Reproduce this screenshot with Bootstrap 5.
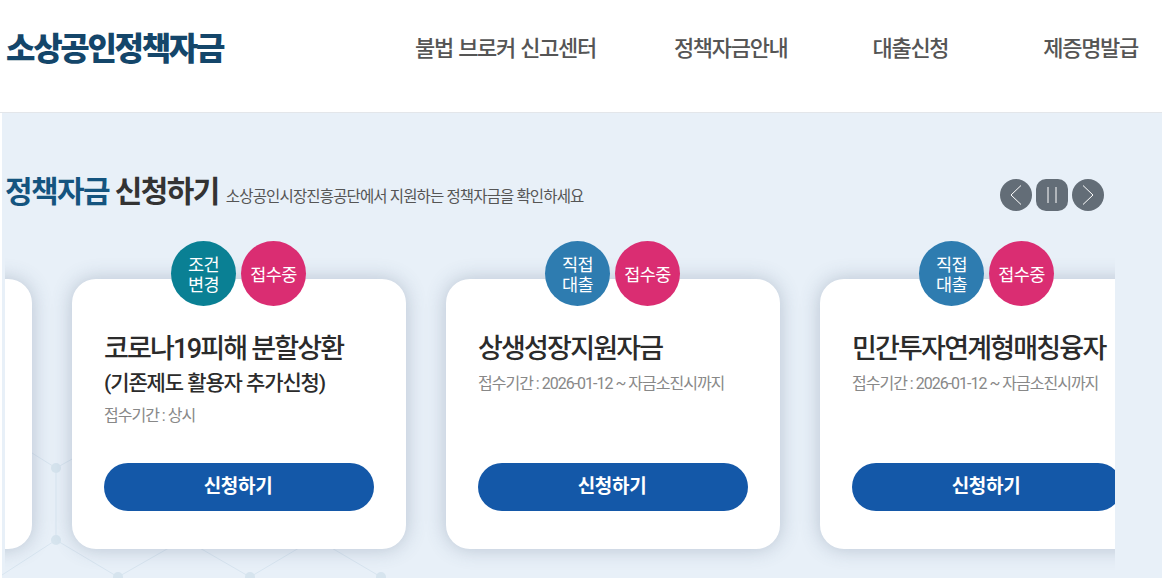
<!DOCTYPE html>
<html lang="ko">
<head>
    <meta charset="UTF-8">
    <meta name="viewport" content="width=device-width, initial-scale=1.0">
    <link href="https://cdn.jsdelivr.net/npm/bootstrap@5.3.0/dist/css/bootstrap.min.css" rel="stylesheet">
    <style>
        html, body {
            height: 580px;
            overflow: hidden;
            background: #fff;
        }
        body {
            font-family: "Roboto", "Noto Sans CJK KR", sans-serif;
        }
        .top-bar {
            height: 113px;
            border-bottom: 1px solid #e3e6ea;
            padding: 0 24px 16px 6px;
        }
        .site-logo {
            font-size: 32px;
            font-weight: 900;
            letter-spacing: -2.3px;
            color: #14466a;
            text-decoration: none;
            margin-top: 2px;
        }
        .top-menu {
            gap: 78px;
        }
        .top-menu a {
            font-size: 22px;
            font-weight: 500;
            letter-spacing: -1.3px;
            word-spacing: 1px;
            color: #555;
            text-decoration: none;
        }
        .top-menu a:nth-child(3) { margin-left: 7px; }
        .top-menu a:nth-child(4) { margin-left: 17px; }
        .hero {
            height: 465px;
            margin-left: 2px;
            background: #e8f0f8;
            overflow: hidden;
        }
        .hero-pattern {
            position: absolute;
            left: 0;
            top: 322px;
        }
        .title-row {
            height: 128px;
            padding: 61px 58px 0 3px;
        }
        .main-title {
            font-size: 30px;
            font-weight: 700;
            letter-spacing: -1.6px;
            color: #333;
            margin: 0;
        }
        .main-title span {
            color: #14547f;
        }
        .sub-title {
            font-size: 15.5px;
            letter-spacing: -.85px;
            color: #555;
            margin: 12px 0 0 7px;
        }
        .ctrl-group {
            margin-top: 5px;
        }
        .ctrl-btn {
            width: 32px;
            height: 32px;
            background: #636d77;
            border: 0;
            padding: 0;
            border-radius: 50%;
        }
        .ctrl-btn.is-pause {
            border-radius: 10px;
        }
        .slide-view {
            margin-left: 3px;
            width: 1110px;
            height: 337px;
            overflow: hidden;
        }
        .slide-track {
            gap: 40px;
            margin-left: -307px;
            padding-top: 38px;
        }
        .fund-card {
            flex: 0 0 334px;
            height: 270px;
            background: #fff;
            border-radius: 24px;
            padding: 52px 32px 38px;
            box-shadow: 0 0 20px rgba(70, 90, 120, .3);
        }
        .bubbles {
            position: absolute;
            top: -38px;
            left: 99px;
            gap: 5px;
        }
        .bubble {
            width: 65px;
            height: 65px;
            border-radius: 50%;
            color: #fff;
            font-size: 17.5px;
            line-height: 20px;
            letter-spacing: -.6px;
            text-align: center;
            padding-top: 2px;
        }
        .bg-teal { background: #0a8094; }
        .bg-blue { background: #2e7cb0; }
        .bg-pink { background: #da2d72; }
        .fund-name {
            font-size: 27px;
            line-height: 36px;
            font-weight: 500;
            letter-spacing: -1.8px;
            color: #2b2b2b;
            margin: 0;
            white-space: nowrap;
        }
        .fund-name small {
            display: block;
            font-size: 21px;
            line-height: 32px;
            font-weight: 500;
            letter-spacing: -1.1px;
        }
        .fund-date {
            font-size: 16px;
            line-height: 22px;
            letter-spacing: -1px;
            color: #888;
            margin: 6px 0 0;
            white-space: nowrap;
        }
        .apply-btn {
            width: 270px;
            height: 48px;
            border-radius: 24px;
            border: 0;
            padding: 0 2px 0 0;
            background: #1458a8;
            color: #fff;
            font-size: 19px;
            font-weight: 700;
            letter-spacing: -.3px;
            flex-shrink: 0;
        }
    </style>
</head>
<body>
    <header class="top-bar d-flex align-items-center justify-content-between">
        <a class="site-logo" href="#">소상공인정책자금</a>
        <nav class="top-menu d-flex">
            <a href="#">불법 브로커 신고센터</a>
            <a href="#">정책자금안내</a>
            <a href="#">대출신청</a>
            <a href="#">제증명발급</a>
        </nav>
    </header>

    <section class="hero position-relative">
        <svg class="hero-pattern" width="460" height="143" viewBox="0 0 460 143" fill="none" stroke="#d8e5f0" stroke-width="1">
            <path d="M30 18L54 33L72 23M54 33V105M54 105L0 140M54 105L116 142L172 110M196 112L248 142L302 110M328 112L379 142"/>
            <g fill="#d6e4ee" stroke="none">
                <circle cx="54" cy="33" r="5"/>
                <circle cx="54" cy="105" r="5"/>
                <circle cx="116" cy="142" r="5"/>
                <circle cx="248" cy="142" r="5"/>
                <circle cx="379" cy="142" r="5"/>
            </g>
        </svg>
        <div class="title-row d-flex align-items-start position-relative">
            <h2 class="main-title"><span>정책자금</span> 신청하기</h2>
            <p class="sub-title mb-0">소상공인시장진흥공단에서 지원하는 정책자금을 확인하세요</p>
            <div class="ctrl-group d-flex gap-1 ms-auto">
                <button class="ctrl-btn d-flex align-items-center justify-content-center" type="button" aria-label="이전">
                    <svg width="14" height="24" viewBox="0 0 14 24" fill="none" stroke="#fff"><path d="M12 2.5L2 12L12 21.5"/></svg>
                </button>
                <button class="ctrl-btn is-pause d-flex align-items-center justify-content-center" type="button" aria-label="정지">
                    <svg width="12" height="16" viewBox="0 0 12 16" fill="none" stroke="#fff"><path d="M2 0V16M10 0V16"/></svg>
                </button>
                <button class="ctrl-btn d-flex align-items-center justify-content-center" type="button" aria-label="다음">
                    <svg width="14" height="24" viewBox="0 0 14 24" fill="none" stroke="#fff"><path d="M2 2.5L12 12L2 21.5"/></svg>
                </button>
            </div>
        </div>
        <div class="slide-view position-relative">
            <div class="slide-track d-flex">
                <div class="fund-card position-relative"></div>

                <div class="fund-card position-relative d-flex flex-column">
                    <div class="bubbles d-flex">
                        <div class="bubble bg-teal d-flex align-items-center justify-content-center">조건<br>변경</div>
                        <div class="bubble bg-pink d-flex align-items-center justify-content-center">접수중</div>
                    </div>
                    <h3 class="fund-name">코로나19피해 분할상환<small>(기존제도 활용자 추가신청)</small></h3>
                    <p class="fund-date">접수기간 : 상시</p>
                    <button class="apply-btn mt-auto" type="button">신청하기</button>
                </div>

                <div class="fund-card position-relative d-flex flex-column">
                    <div class="bubbles d-flex">
                        <div class="bubble bg-blue d-flex align-items-center justify-content-center">직접<br>대출</div>
                        <div class="bubble bg-pink d-flex align-items-center justify-content-center">접수중</div>
                    </div>
                    <h3 class="fund-name">상생성장지원자금</h3>
                    <p class="fund-date">접수기간 : 2026-01-12 ~ 자금소진시까지</p>
                    <button class="apply-btn mt-auto" type="button">신청하기</button>
                </div>

                <div class="fund-card position-relative d-flex flex-column">
                    <div class="bubbles d-flex">
                        <div class="bubble bg-blue d-flex align-items-center justify-content-center">직접<br>대출</div>
                        <div class="bubble bg-pink d-flex align-items-center justify-content-center">접수중</div>
                    </div>
                    <h3 class="fund-name">민간투자연계형매칭융자</h3>
                    <p class="fund-date">접수기간 : 2026-01-12 ~ 자금소진시까지</p>
                    <button class="apply-btn mt-auto" type="button">신청하기</button>
                </div>
            </div>
        </div>
    </section>

    <script src="https://cdn.jsdelivr.net/npm/bootstrap@5.3.0/dist/js/bootstrap.bundle.min.js"></script>
</body>
</html>
